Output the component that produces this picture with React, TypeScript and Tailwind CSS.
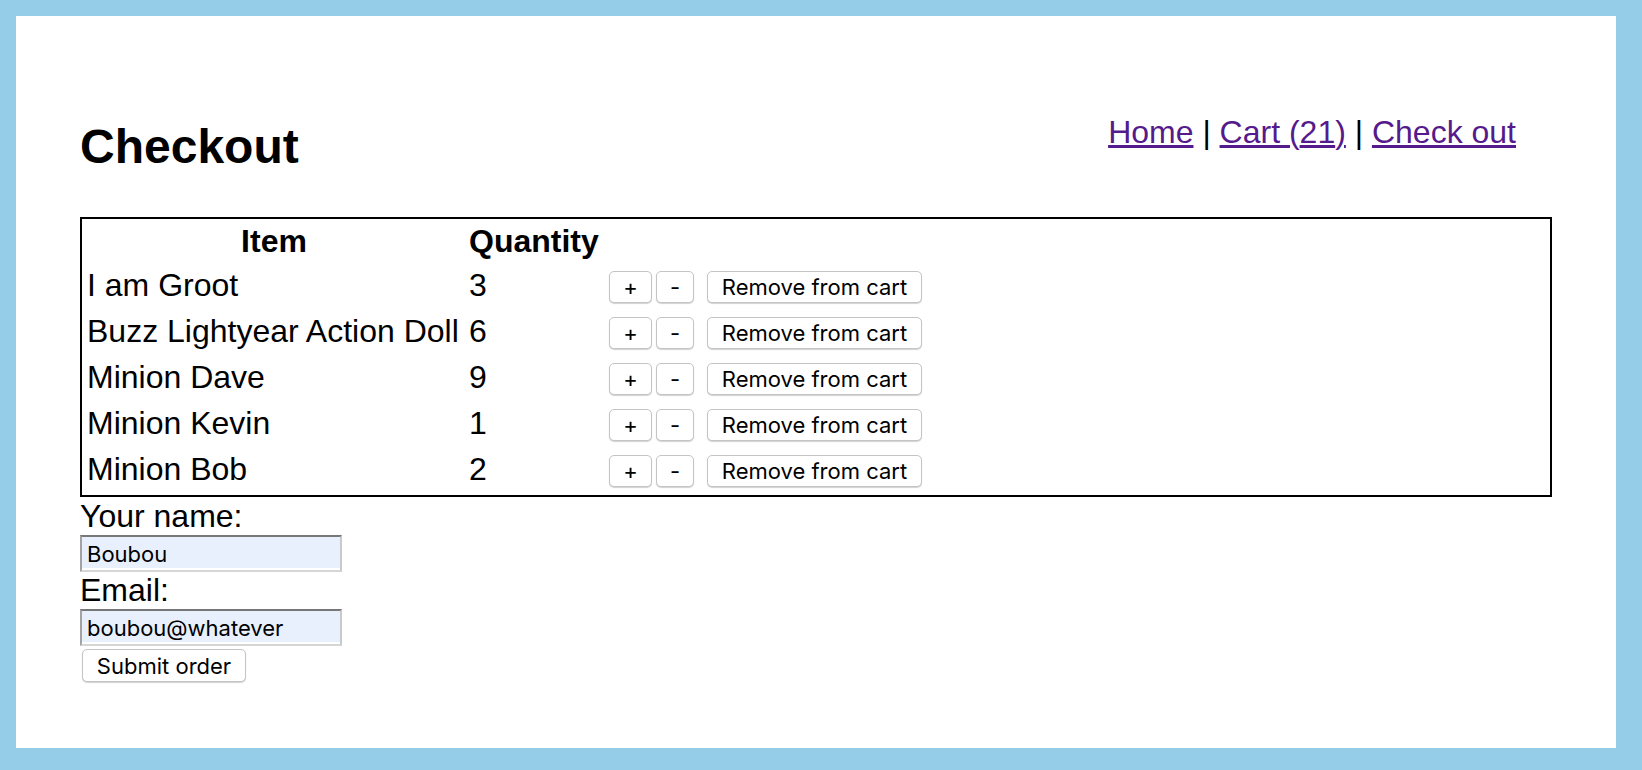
import { useState } from "react";

type CartItem = {
  name: string;
  quantity: number;
};

const initialItems: CartItem[] = [
  { name: "I am Groot", quantity: 3 },
  { name: "Buzz Lightyear Action Doll", quantity: 6 },
  { name: "Minion Dave", quantity: 9 },
  { name: "Minion Kevin", quantity: 1 },
  { name: "Minion Bob", quantity: 2 },
];

const btn =
  "h-[32px] bg-white border border-[#c4c4c4] rounded-[5px] shadow-[0_1px_1px_rgba(0,0,0,0.18)] text-[22px] leading-none text-black font-['Inter',sans-serif] flex items-center justify-center";

const field =
  "w-[262px] h-[37px] bg-[#e8f0fe] border-2 border-t-[#777777] border-l-[#a3a3a3] border-r-[#c9c9c9] border-b-[#d6d6d6] shadow-[inset_0_-2px_0_#ffffff] pl-[5px] text-[22px] leading-[30px] font-['Inter',sans-serif] outline-none";

const Nav = ({ count }: { count: number }) => {
  return (
    <nav className="pr-[36px] text-[32px] leading-[37px] text-black">
      <a href="#" className="text-[#551a8b] underline">
        Home
      </a>{" "}
      |{" "}
      <a href="#" className="text-[#551a8b] underline">
        Cart ({count})
      </a>{" "}
      |{" "}
      <a href="#" className="text-[#551a8b] underline">
        Check out
      </a>
    </nav>
  );
};

const CartRow = ({
  item,
  onAdd,
  onSub,
  onRemove,
}: {
  item: CartItem;
  onAdd: () => void;
  onSub: () => void;
  onRemove: () => void;
}) => {
  return (
    <tr className="h-[46px]">
      <td className="pl-[5px] align-middle whitespace-nowrap">{item.name}</td>
      <td className="pl-[3px] align-middle">{item.quantity}</td>
      <td className="pl-[3px] align-middle">
        <div className="flex items-center pt-[4px]">
          <button className={`${btn} w-[43px]`} onClick={onAdd}>
            +
          </button>
          <button className={`${btn} w-[38px] ml-[4px]`} onClick={onSub}>
            -
          </button>
          <button className={`${btn} w-[215px] ml-[13px]`} onClick={onRemove}>
            Remove from cart
          </button>
        </div>
      </td>
    </tr>
  );
};

const App = () => {
  const [items, setItems] = useState<CartItem[]>(initialItems);
  const [name, setName] = useState("Boubou");
  const [email, setEmail] = useState("boubou@whatever");

  const total = items.reduce((sum, it) => sum + it.quantity, 0);

  const update = (index: number, delta: number) =>
    setItems(
      items.map((it, i) =>
        i === index ? { ...it, quantity: Math.max(0, it.quantity + delta) } : it
      )
    );

  return (
    <div className="h-[770px] bg-[#95cde8] pt-4 pl-4 pr-[26px] pb-[22px] font-['Liberation_Sans',Arial,sans-serif] text-black">
      <div className="h-full bg-white px-16 pt-[98px]">
        <header className="flex justify-between items-start">
          <h1 className="mt-[5px] text-[48px] leading-[56px] font-bold">
            Checkout
          </h1>
          <Nav count={total} />
        </header>

        <div className="mt-[42px] border-2 border-black pb-[3px]">
          <table className="w-full table-fixed border-collapse text-[32px] leading-[36px]">
            <thead>
              <tr className="h-[43px]">
                <th className="w-[384px] text-center font-bold">Item</th>
                <th className="w-[140px] pl-[3px] text-left font-bold">
                  Quantity
                </th>
                <th />
              </tr>
            </thead>
            <tbody>
              {items.map((item, index) => (
                <CartRow
                  key={item.name}
                  item={item}
                  onAdd={() => update(index, 1)}
                  onSub={() => update(index, -1)}
                  onRemove={() =>
                    setItems(items.filter((_, i) => i !== index))
                  }
                />
              ))}
            </tbody>
          </table>
        </div>

        <form
          className="flex flex-col items-start text-[32px]"
          onSubmit={(e) => e.preventDefault()}
        >
          <label className="leading-[38px]">Your name:</label>
          <input
            value={name}
            onChange={(e) => setName(e.target.value)}
            className={field}
          />
          <label className="leading-[37px]">Email:</label>
          <input
            value={email}
            onChange={(e) => setEmail(e.target.value)}
            className={field}
          />
          <button
            type="submit"
            className={`${btn} w-[164px] h-[33px] mt-[3px] ml-[2px]`}
          >
            Submit order
          </button>
        </form>
      </div>
    </div>
  );
};

export default App;
